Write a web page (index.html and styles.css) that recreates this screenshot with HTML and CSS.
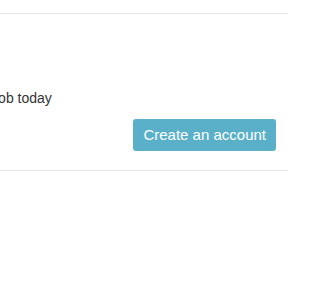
FILE: index.html
```html
<!DOCTYPE html>
<html>
<head>
<meta charset="utf-8">
<link rel="stylesheet" href="styles.css">
</head>
<body>
<section class="cta">
  <p class="cta-text">job today</p>
  <a class="btn-info" href="#">Create an account</a>
</section>
</body>
</html>
```
FILE: styles.css
```css
html, body {
  margin: 0;
  padding: 0;
  background: #fff;
}
body {
  font-family: "Liberation Sans", Arial, sans-serif;
  color: #333;
  padding-top: 13px;
  width: 288px;
  overflow: hidden;
}
.cta {
  box-sizing: border-box;
  width: 288px;
  border-top: 1px solid #e6e6e6;
  border-bottom: 1px solid #e6e6e6;
  display: flex;
  flex-direction: column;
  padding: 74px 12px 19px 0;
}
.cta-text {
  margin: 0 0 11px -5px;
  font-size: 14px;
  line-height: 20px;
  white-space: nowrap;
}
.btn-info {
  align-self: flex-end;
  display: block;
  background: #5bb0c9;
  color: #fff;
  text-decoration: none;
  font-size: 15px;
  line-height: 20px;
  padding: 6px 10px;
  border-radius: 3px;
}
```
